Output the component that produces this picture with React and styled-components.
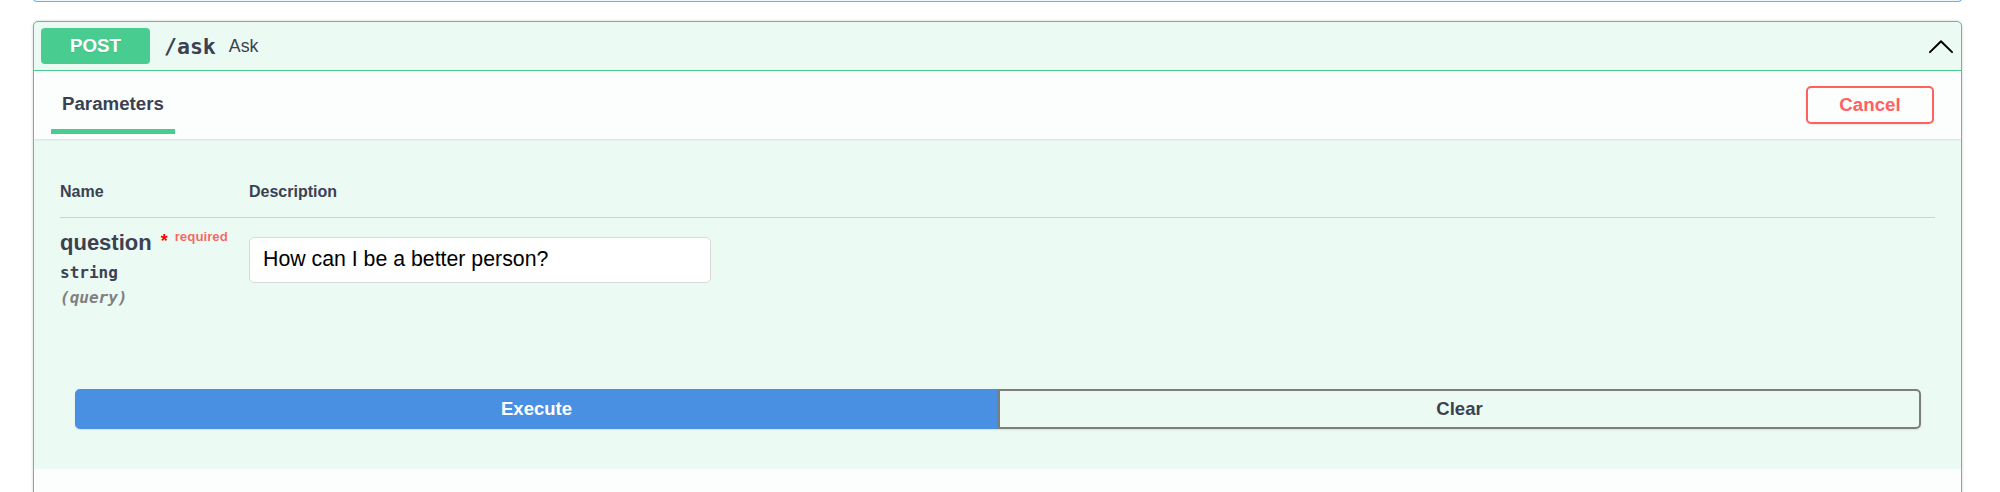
import React from 'react'
import styled, { createGlobalStyle } from 'styled-components'

const GlobalStyle = createGlobalStyle`
  body {
    margin: 0;
    background: #fff;
    font-family: 'Liberation Sans', Arial, sans-serif;
    color: #3b4151;
  }
`

const Page = styled.div`
  padding: 0 38px 0 33px;
`

const PrevBlock = styled.div`
  height: 3px;
  margin-top: -2px;
  margin-bottom: 19px;
  border: 1px solid #61affe;
  border-top: 0;
  border-radius: 0 0 5px 5px;
  background: rgba(97, 175, 254, 0.1);
`

const OpBlock = styled.div`
  border: 1px solid #49cc90;
  border-radius: 5px;
  background: rgba(73, 204, 144, 0.1);
  box-shadow: 0 0 3px rgba(0, 0, 0, 0.19);
  overflow: hidden;
`

const Summary = styled.div`
  display: flex;
  align-items: center;
  padding: 6px 6px 6px 7px;
  border-bottom: 1px solid #49cc90;
`

const Method = styled.span`
  width: 109px;
  height: 36px;
  display: flex;
  align-items: center;
  justify-content: center;
  border-radius: 4px;
  background: #49cc90;
  color: #fff;
  font-size: 18.7px;
  font-weight: 700;
  text-shadow: 0 1px 0 rgba(0, 0, 0, 0.1);
`

const Path = styled.span`
  margin-left: 14px;
  font-family: 'DejaVu Sans Mono', monospace;
  font-size: 21.5px;
  font-weight: 700;
  color: #3b4151;
`

const Description = styled.span`
  margin-left: 13px;
  font-size: 17.8px;
  color: #3b4151;
`

const Arrow = styled.svg`
  margin-left: auto;
  width: 28px;
  height: 28px;
`

const SectionHeader = styled.div`
  display: flex;
  align-items: center;
  min-height: 68px;
  padding: 0 27px 0 17px;
  background: rgba(255, 255, 255, 0.8);
  box-shadow: 0 1px 2px rgba(0, 0, 0, 0.1);
`

const TabItem = styled.div`
  align-self: flex-end;
  margin-bottom: 5px;
  padding: 0 11px 14px;
  border-bottom: 5px solid #49cc90;
  font-size: 18.7px;
  font-weight: 700;
  line-height: 23px;
  color: #3b4151;
`

const CancelButton = styled.button`
  margin-left: auto;
  width: 128px;
  height: 38px;
  border: 2px solid #ff6060;
  border-radius: 5px;
  background: transparent;
  color: #ff6060;
  font-family: inherit;
  font-size: 18.7px;
  font-weight: 700;
  box-shadow: 0 1px 2px rgba(0, 0, 0, 0.1);
`

const ParamsBody = styled.div`
  padding: 27px 26px;
`

const Row = styled.div`
  display: grid;
  grid-template-columns: 189px 1fr;
  border-bottom: ${p => (p.$head ? '1px solid rgba(59, 65, 81, 0.2)' : 'none')};
  padding: ${p => (p.$head ? '15.5px 0 15px' : '6px 0 14px')};
`

const HeadCell = styled.div`
  font-size: 16px;
  font-weight: 700;
  line-height: 20px;
  color: #3b4151;
`

const NameCell = styled.div`
  display: flex;
  flex-direction: column;
`

const ParamName = styled.div`
  font-size: 22px;
  font-weight: 700;
  line-height: 26px;
  color: #3b4151;
`

const Star = styled.span`
  color: #f00;
  font-size: 18px;
  padding: 0 7px 0 9px;
  vertical-align: 3px;
`

const Required = styled.span`
  color: rgba(255, 0, 0, 0.6);
  font-size: 13.3px;
  vertical-align: 9px;
`

const ParamType = styled.div`
  margin-top: ${p => p.$gap || '7px'};
  font-family: 'DejaVu Sans Mono', monospace;
  font-size: 16px;
  font-weight: 700;
  line-height: 20px;
  color: #3b4151;
`

const ParamIn = styled(ParamType)`
  font-style: italic;
  color: #808080;
`

const TextInput = styled.input`
  box-sizing: border-box;
  width: 462px;
  height: 46px;
  margin-top: 13px;
  padding: 0 13px;
  border: 1px solid #d9d9d9;
  border-radius: 5px;
  background: #fff;
  font-family: 'Liberation Sans', Arial, sans-serif;
  font-size: 21.3px;
  color: #000;
  outline: none;
`

const ExecuteWrapper = styled.div`
  display: flex;
  padding: 40px 40px 40px 41px;
`

const GroupButton = styled.button`
  flex: 1;
  height: 40px;
  font-family: inherit;
  font-size: 18.5px;
  font-weight: 700;
  box-shadow: 0 1px 2px rgba(0, 0, 0, 0.1);
  border: 2px solid ${p => (p.$primary ? '#4990e2' : '#7d7d7d')};
  background: ${p => (p.$primary ? '#4990e2' : 'transparent')};
  color: ${p => (p.$primary ? '#fff' : '#3b4151')};
  border-radius: ${p => (p.$primary ? '5px 0 0 5px' : '0 5px 5px 0')};
`

export default function App() {
  return (
    <Page>
      <GlobalStyle />
      <PrevBlock />
      <OpBlock>
        <Summary>
          <Method>POST</Method>
          <Path>/ask</Path>
          <Description>Ask</Description>
          <Arrow viewBox='0 0 20 20'>
            <path
              fill='#000'
              d='M17.418 14.908c.272.268.709.268.979 0a.68.68 0 0 0 0-.969l-7.908-7.83a.697.697 0 0 0-.979 0l-7.908 7.83a.68.68 0 0 0 0 .969.697.697 0 0 0 .979 0L10 7.767l7.418 7.141z'
            />
          </Arrow>
        </Summary>
        <SectionHeader>
          <TabItem>Parameters</TabItem>
          <CancelButton>Cancel</CancelButton>
        </SectionHeader>
        <ParamsBody>
          <Row $head>
            <HeadCell>Name</HeadCell>
            <HeadCell>Description</HeadCell>
          </Row>
          <Row>
            <NameCell>
              <ParamName>
                question<Star>*</Star><Required>required</Required>
              </ParamName>
              <ParamType>string</ParamType>
              <ParamIn $gap='5.5px'>(query)</ParamIn>
            </NameCell>
            <div>
              <TextInput defaultValue='How can I be a better person?' />
            </div>
          </Row>
        </ParamsBody>
        <ExecuteWrapper>
          <GroupButton $primary>Execute</GroupButton>
          <GroupButton>Clear</GroupButton>
        </ExecuteWrapper>
        <SectionHeader />
      </OpBlock>
    </Page>
  )
}
